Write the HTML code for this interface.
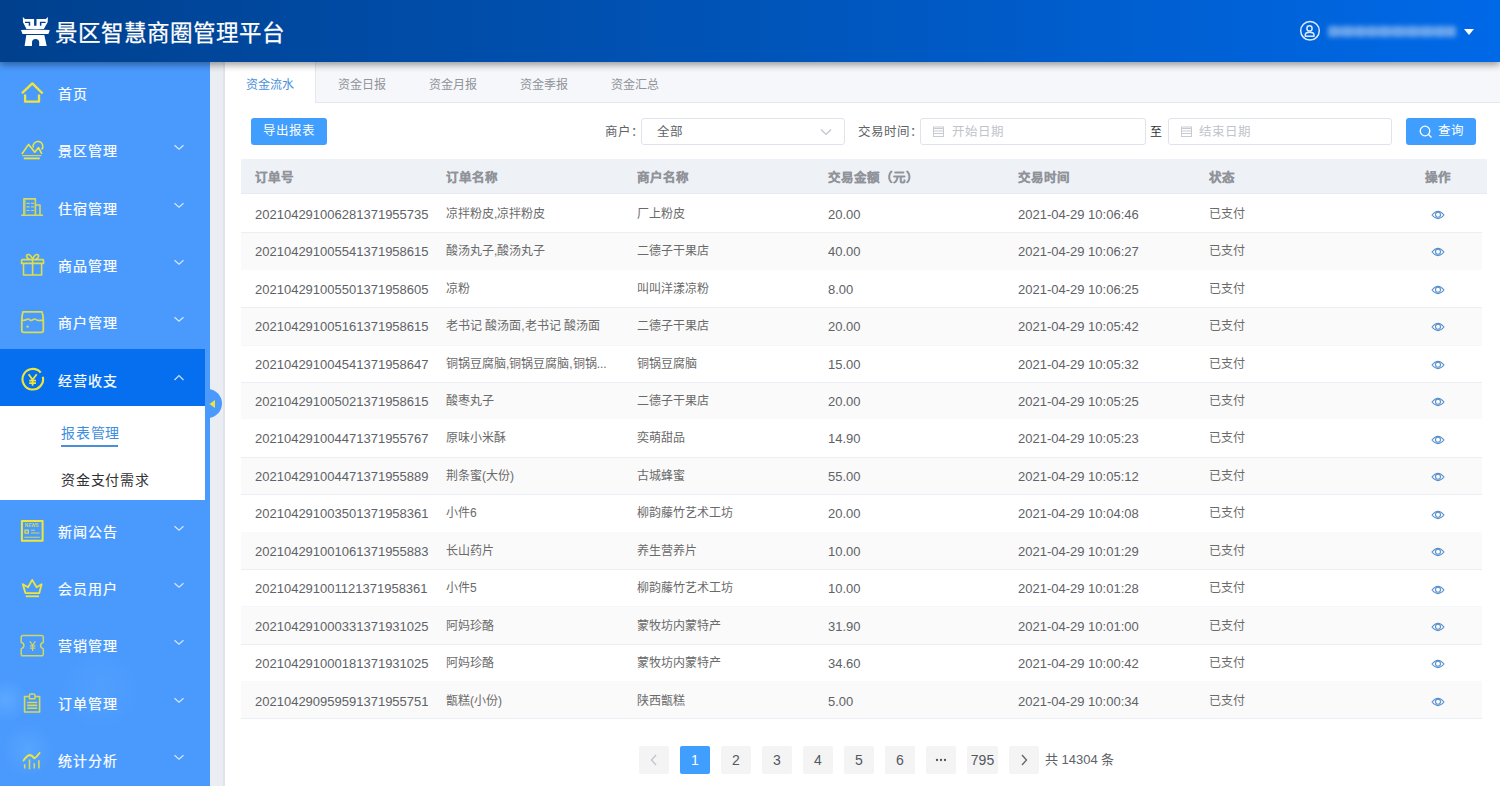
<!DOCTYPE html>
<html lang="zh-CN">
<head>
<meta charset="utf-8">
<style>
*{margin:0;padding:0;box-sizing:border-box;}
html,body{width:1500px;height:786px;overflow:hidden;background:#fff;font-family:"Liberation Sans",sans-serif;position:relative;}
.hdr{position:absolute;left:0;top:0;width:1500px;height:62px;background:linear-gradient(90deg,#00408d 0%,#004aa3 22.7%,#0054b8 50%,#0069e8 100%);box-shadow:0 3px 7px rgba(0,0,0,.38);z-index:5;}
.hdr .title{position:absolute;left:55px;top:19px;font-size:22.5px;-webkit-text-stroke:0.25px #fff;line-height:30px;color:#fff;white-space:nowrap;}
.side{position:absolute;left:0;top:0;width:210px;height:786px;background:radial-gradient(circle at 6px 700px, rgba(110,185,255,.45) 0, rgba(110,185,255,0) 22px),radial-gradient(circle at 28px 750px, rgba(110,185,255,.35) 0, rgba(110,185,255,0) 26px),radial-gradient(circle at 100px 690px, rgba(110,185,255,.18) 0, rgba(110,185,255,0) 40px),#4a9afe;overflow:hidden;}
.gap{position:absolute;left:210px;top:62px;width:15px;height:724px;background:#eaedf2;border-right:2px solid #e0e4ea;}
.main{position:absolute;left:225px;top:62px;width:1276px;height:724px;background:#fff;}
.mt{position:absolute;left:58px;height:22px;line-height:25px;font-size:14px;letter-spacing:0.9px;color:#fff;-webkit-text-stroke:0.2px #fff;white-space:nowrap;}
.sub{position:absolute;left:61px;height:22px;line-height:25px;font-size:14px;letter-spacing:0.75px;color:#303133;white-space:nowrap;}
.sub.act{color:#3d8ee2;}
.tabs{position:absolute;left:225px;top:62px;width:1275px;height:41px;background:#f5f7fa;border-bottom:1px solid #e4e7ed;}
.tab{position:absolute;top:0;height:40px;line-height:46px;font-size:12px;color:#909399;text-align:center;width:92px;}
.tab.act{background:#fff;color:#4a90d8;border-right:1px solid #e4e7ed;height:41px;}
.btn{position:absolute;top:118px;height:27px;line-height:27px;background:#409eff;border-radius:3px;color:#fff;font-size:12.5px;text-align:center;}
.lbl{position:absolute;top:118px;height:27px;line-height:28px;font-size:12.5px;color:#606266;white-space:nowrap;}
.inp{position:absolute;top:118px;height:27px;border:1px solid #e0e3e9;border-radius:3px;background:#fff;}
.inp .ph{position:absolute;top:0;line-height:26px;font-size:12.5px;color:#c0c4cc;white-space:nowrap;}
.thead{position:absolute;left:241px;top:159px;width:1246px;height:35px;background:#eef1f6;border-bottom:1px solid #e6e9f0;}
.th{position:absolute;top:0;line-height:38px;font-size:12.5px;font-weight:bold;color:#909399;-webkit-text-stroke:0.2px #909399;white-space:nowrap;}
.tr{position:absolute;left:241px;width:1241px;height:37px;}
.stripe{position:absolute;left:241px;width:1241px;background:#fafafa;}
.hline{position:absolute;left:241px;width:1241px;height:1px;background:#ebeef5;}
.td{position:absolute;top:0.8px;line-height:37px;font-size:13px;color:#606266;white-space:nowrap;}
.td.cn{font-size:12px;color:#6a6a6a;}
.eye{position:absolute;top:15px;}
.pb{position:absolute;top:746px;height:28px;background:#f4f4f5;border-radius:2px;font-size:14px;color:#53575e;display:flex;align-items:center;justify-content:center;}
.pb.act{background:#409eff;color:#fff;}
.total{position:absolute;left:1045px;top:746px;line-height:28px;font-size:13px;color:#606266;white-space:nowrap;}
</style>
</head>
<body>
<div class="side">
<div style="position:absolute;left:0;top:349px;width:205px;height:57px;background:#056fef"></div>
<div style="position:absolute;left:0;top:406px;width:205px;height:94px;background:#fff"></div>
<div class="mt" style="top:82px">首页</div>
<div class="mt" style="top:139px">景区管理</div>
<svg style="position:absolute;left:173px;top:144px" width="12" height="7" viewBox="0 0 12 7"><path d="M1.5 1.2 L6 5.2 L10.5 1.2" fill="none" stroke="#e4f0ff" stroke-width="1.15" opacity=".9"/></svg>
<div class="mt" style="top:197px">住宿管理</div>
<svg style="position:absolute;left:173px;top:202px" width="12" height="7" viewBox="0 0 12 7"><path d="M1.5 1.2 L6 5.2 L10.5 1.2" fill="none" stroke="#e4f0ff" stroke-width="1.15" opacity=".9"/></svg>
<div class="mt" style="top:254px">商品管理</div>
<svg style="position:absolute;left:173px;top:259px" width="12" height="7" viewBox="0 0 12 7"><path d="M1.5 1.2 L6 5.2 L10.5 1.2" fill="none" stroke="#e4f0ff" stroke-width="1.15" opacity=".9"/></svg>
<div class="mt" style="top:311px">商户管理</div>
<svg style="position:absolute;left:173px;top:316px" width="12" height="7" viewBox="0 0 12 7"><path d="M1.5 1.2 L6 5.2 L10.5 1.2" fill="none" stroke="#e4f0ff" stroke-width="1.15" opacity=".9"/></svg>
<div class="mt" style="top:369px">经营收支</div>
<svg style="position:absolute;left:173px;top:374px" width="12" height="7" viewBox="0 0 12 7"><path d="M1.5 6 L6 1.5 L10.5 6" fill="none" stroke="#e4f0ff" stroke-width="1.15" opacity=".9"/></svg>
<div class="mt" style="top:520px">新闻公告</div>
<svg style="position:absolute;left:173px;top:525px" width="12" height="7" viewBox="0 0 12 7"><path d="M1.5 1.2 L6 5.2 L10.5 1.2" fill="none" stroke="#e4f0ff" stroke-width="1.15" opacity=".9"/></svg>
<div class="mt" style="top:577px">会员用户</div>
<svg style="position:absolute;left:173px;top:582px" width="12" height="7" viewBox="0 0 12 7"><path d="M1.5 1.2 L6 5.2 L10.5 1.2" fill="none" stroke="#e4f0ff" stroke-width="1.15" opacity=".9"/></svg>
<div class="mt" style="top:634px">营销管理</div>
<svg style="position:absolute;left:173px;top:639px" width="12" height="7" viewBox="0 0 12 7"><path d="M1.5 1.2 L6 5.2 L10.5 1.2" fill="none" stroke="#e4f0ff" stroke-width="1.15" opacity=".9"/></svg>
<div class="mt" style="top:692px">订单管理</div>
<svg style="position:absolute;left:173px;top:697px" width="12" height="7" viewBox="0 0 12 7"><path d="M1.5 1.2 L6 5.2 L10.5 1.2" fill="none" stroke="#e4f0ff" stroke-width="1.15" opacity=".9"/></svg>
<div class="mt" style="top:749px">统计分析</div>
<svg style="position:absolute;left:173px;top:754px" width="12" height="7" viewBox="0 0 12 7"><path d="M1.5 1.2 L6 5.2 L10.5 1.2" fill="none" stroke="#e4f0ff" stroke-width="1.15" opacity=".9"/></svg>
<svg style="position:absolute;left:0;top:0" width="210" height="786" viewBox="0 0 210 786" fill="none" stroke="#eee63a" stroke-linejoin="round">
<path d="M22.6 92.6 L32.3 83.4 L42 92.8" stroke-width="2.3" stroke-linecap="round"/>
<path d="M25.1 94.6 V101.7 H39 V94.6" stroke-width="2.3"/>
<path d="M21.9 154 L28.6 144.4 L34.8 152.2 L38.6 147.6 L41.8 153.8" stroke-width="1.6"/>
<path d="M33.2 147.6 A4.9 4.9 0 1 1 41.6 149.6" stroke-width="1.5"/>
<path d="M22.2 155.6 H41.3" stroke-width="1.2" opacity=".8"/>
<path d="M23.8 158.4 H39.8" stroke-width="1.8"/>
<path d="M23.9 214.5 V198.9 H35.4 V214.5 M36.2 205 H40 V214.5 M21.2 215.2 H43" stroke-width="1.6" opacity=".85"/>
<path d="M25 199.5 V214" stroke-width="1.2" opacity=".6"/>
<path d="M26.4 203.3 H29.7 M31 203.3 H34.2 M26.4 206.9 H29.7 M31 206.9 H34.2 M26.4 210.5 H29.7 M31 210.5 H34.2" stroke-width="1.2" opacity=".75"/>
<path d="M22.3 259.6 H42.8 Q43.5 259.6 43.5 260.3 V263.4 H21.6 V260.3 Q21.6 259.6 22.3 259.6 Z M23.5 263.7 V275 H41.6 V263.7 M32.6 259.4 V275" stroke-width="1.6" opacity=".9"/>
<path d="M32.6 259 C31 255.5 29 253.8 27.3 254.7 C25.8 255.8 27 258.6 29.5 259.4 M32.6 259 C34.2 255.5 36.2 253.8 37.9 254.7 C39.4 255.8 38.2 258.6 35.7 259.4" stroke-width="1.6" opacity=".9"/>
<path d="M23 311.8 H42 Q43.3 316 43.3 320 V330.5 Q43.3 332.4 41.4 332.4 H23.7 Q21.8 332.4 21.8 330.5 V320 Q21.8 316 23 311.8 Z" stroke-width="1.8" opacity=".88"/>
<path d="M22 320.3 Q25 320.6 26.6 319.5 Q28.2 318.4 29.7 319.8 Q31.2 321.2 33 319.6 Q34.7 318.3 36.2 319.7 Q37.8 321 39.4 320.3 Q41.5 320.5 43 320.3" stroke-width="1.6" opacity=".88"/>
<circle cx="27.6" cy="326.6" r="1.2" fill="#eee63a" stroke="none" opacity=".88"/>
<path d="M42.8 376.7 A10.3 10.3 0 1 1 40.7 372.6" stroke-width="2.1"/>
<path d="M28.6 374.3 L32.6 379.8 L36.7 374.3 M32.6 379.8 V385.8 M29.2 380.6 H36 M29.2 383.1 H36" stroke-width="1.8"/>
<rect x="21.9" y="521" width="20.7" height="19.7" stroke-width="2"/>
<text x="32" y="526.6" font-size="4.6" font-family="Liberation Sans" font-weight="bold" fill="#eee63a" stroke="none" text-anchor="middle" opacity=".8">NEWS</text>
<rect x="25" y="530.2" width="3.3" height="3" stroke-width="1.3" opacity=".9"/>
<path d="M31 530.2 H35 M31 533 H39.5 M24.3 537.3 H39.8" stroke-width="1.1" opacity=".8"/>
<path d="M22.8 584.2 L28 587.2 L32.2 579.9 L36.6 587.2 L41.6 584.3 L39.3 593.1 H25.4 Z" stroke-width="1.8"/>
<path d="M25.8 596.3 H39" stroke-width="1.7"/>
<path d="M23 635.6 H41.5 Q43.3 635.6 43.3 637.4 V642.3 Q40.6 643.3 40.6 645.6 Q40.6 647.9 43.3 648.9 V654 Q43.3 655.8 41.5 655.8 H23 Q21.2 655.8 21.2 654 V648.9 Q23.9 647.9 23.9 645.6 Q23.9 643.3 21.2 642.3 V637.4 Q21.2 635.6 23 635.6 Z" stroke-width="1.5" opacity=".8"/>
<path d="M29.8 641.3 L32.6 645.2 L35.4 641.3 M32.6 645.2 V651 M29.9 645.8 H35.3 M29.9 648.1 H35.3" stroke-width="1.2" opacity=".8"/>
<path d="M28.8 696.5 H24.6 V712 H39.6 V696.5 H35.4" stroke-width="1.6" opacity=".85"/>
<path d="M29.4 698.7 V695.4 Q29.4 694 30.8 694 H33.6 Q35 694 35 695.4 V698.7 Z" stroke-width="1.5" opacity=".85"/>
<path d="M27.2 702.5 H37.2 M27.2 705.4 H37.2 M27.2 708.3 H37.2" stroke-width="1.6" opacity=".85"/>
<path d="M24.7 764.2 V768.5 M29.5 759.5 V769.3 M34.3 763.2 V768.5 M38.9 760.2 V768.5" stroke-width="1.6" opacity=".85"/>
<path d="M23.5 760.6 Q27 755.4 29.9 755 Q32 755.3 34.5 758.4 Q37 756.5 39.6 753" stroke-width="1.8" stroke-linecap="round"/>
</svg>
<div class="sub act" style="top:421px">报表管理</div>
<div style="position:absolute;left:61px;top:445px;width:57px;height:2px;background:#4a90d9"></div>
<div class="sub" style="top:468px">资金支付需求</div>
<div style="position:absolute;left:205px;top:390px;width:16px;height:28px;"></div>
</div>
<div class="gap"></div>
<div class="main"></div>
<div style="position:absolute;left:205px;top:389px;width:17px;height:29px;background:#4a9afe;border-radius:0 14.5px 14.5px 0 / 0 14.5px 14.5px 0;z-index:3"><svg style="position:absolute;left:3px;top:10px" width="8" height="10" viewBox="0 0 8 10"><path d="M7 1 L1.5 5 L7 9 Z" fill="#ede43c"/></svg></div>

<div class="hdr">
  <svg style="position:absolute;left:15px;top:10px" width="40" height="42" viewBox="15 10 40 42">
    <path fill-rule="evenodd" fill="#fff" d="M22.8 16.9 L24.9 18.9 L45.8 18.9 L47.9 16.9 L47.7 22.3 L43.8 28.9 L26.5 28.9 L23 22.3 Z M34.1 18.9 H36.5 V25.8 H34.1 Z M25 21.8 H30.2 V25.8 H28.7 V22.9 H25 Z M39.9 21.8 H45.6 V22.9 H41.4 V25.8 H39.9 Z"/>
    <path fill="#fff" d="M21 30 Q35.3 29.2 49.8 30 L48.4 34 L22.5 34 Z"/>
    <path fill="#fff" d="M26.3 35.1 H44.3 L46.7 45.9 H39.2 V42.6 A3.6 3.6 0 0 0 32 42.6 V45.9 H24.6 Z"/>
  </svg>
  <div class="title">景区智慧商圈管理平台</div>
  <svg style="position:absolute;left:1299px;top:20px" width="22" height="22" viewBox="0 0 22 22"><circle cx="11" cy="10.8" r="9.3" fill="none" stroke="#dcebff" stroke-width="1.5"/><circle cx="10.5" cy="8.4" r="2.6" fill="none" stroke="#dcebff" stroke-width="1.5"/><path d="M6.3 16.3 V14.8 Q6.3 12.2 10.6 12.2 Q15 12.2 15 14.8 V16.3 Z" fill="none" stroke="#dcebff" stroke-width="1.5" stroke-linejoin="round"/></svg>
  <div style="position:absolute;left:1326px;top:23px;width:132px;height:17px;filter:blur(2.6px);opacity:.62"><div style="position:absolute;left:2px;top:4px;width:128px;height:9px;background:#8ab8f2"></div><div style="position:absolute;left:2px;top:3px;width:12px;height:11px;background:#a8c9f4;border-radius:2px"></div><div style="position:absolute;left:15px;top:3px;width:13px;height:11px;background:#a8c9f4;border-radius:2px"></div><div style="position:absolute;left:29px;top:3px;width:11px;height:11px;background:#a8c9f4;border-radius:2px"></div><div style="position:absolute;left:41px;top:3px;width:10px;height:11px;background:#a8c9f4;border-radius:2px"></div><div style="position:absolute;left:52px;top:3px;width:13px;height:11px;background:#a8c9f4;border-radius:2px"></div><div style="position:absolute;left:66px;top:3px;width:13px;height:11px;background:#a8c9f4;border-radius:2px"></div><div style="position:absolute;left:80px;top:3px;width:13px;height:11px;background:#a8c9f4;border-radius:2px"></div><div style="position:absolute;left:94px;top:3px;width:13px;height:11px;background:#a8c9f4;border-radius:2px"></div><div style="position:absolute;left:108px;top:3px;width:12px;height:11px;background:#a8c9f4;border-radius:2px"></div><div style="position:absolute;left:120px;top:3px;width:10px;height:11px;background:#a8c9f4;border-radius:2px"></div></div>
  <svg style="position:absolute;left:1463px;top:28px" width="12" height="8" viewBox="0 0 12 8"><path d="M1 1 H11 L6 7 Z" fill="#fff"/></svg>
</div>

<div class="tabs">
  <div class="tab act" style="left:0;width:91px">资金流水</div>
  <div class="tab" style="left:91px;width:91px">资金日报</div>
  <div class="tab" style="left:182px;width:91px">资金月报</div>
  <div class="tab" style="left:273px;width:91px">资金季报</div>
  <div class="tab" style="left:364px;width:91px">资金汇总</div>
</div>

<div class="btn" style="left:251px;width:76px">导出报表</div>
<div class="lbl" style="left:605px">商户：</div>
<div class="inp" style="left:641px;width:204px"><span class="ph" style="left:15px;color:#606266">全部</span>
  <svg style="position:absolute;left:178px;top:9px" width="12" height="8" viewBox="0 0 12 8"><path d="M1 1.5 L6 6.5 L11 1.5" fill="none" stroke="#c0c4cc" stroke-width="1.2"/></svg></div>
<div class="lbl" style="left:858px">交易时间：</div>
<div class="inp" style="left:920px;width:226px"><svg style="position:absolute;left:12px;top:7px" width="11" height="11" viewBox="0 0 11 11"><rect x="0.5" y="1" width="10" height="9.5" fill="none" stroke="#c8cbd2" stroke-width="1"/><path d="M0.5 2.5 H10.5 M0.5 5 H10.5 M0.5 7.5 H10.5" stroke="#c8cbd2" stroke-width="1"/></svg><span class="ph" style="left:31px">开始日期</span></div>
<div class="lbl" style="left:1150px;color:#303133;font-size:12px">至</div>
<div class="inp" style="left:1168px;width:224px"><svg style="position:absolute;left:12px;top:7px" width="11" height="11" viewBox="0 0 11 11"><rect x="0.5" y="1" width="10" height="9.5" fill="none" stroke="#c8cbd2" stroke-width="1"/><path d="M0.5 2.5 H10.5 M0.5 5 H10.5 M0.5 7.5 H10.5" stroke="#c8cbd2" stroke-width="1"/></svg><span class="ph" style="left:30px">结束日期</span></div>
<div class="btn" style="left:1406px;width:70px"><svg style="position:absolute;left:13px;top:7px" width="14" height="14" viewBox="0 0 14 14"><circle cx="6" cy="6" r="4.8" fill="none" stroke="#fff" stroke-width="1.3"/><path d="M9.5 9.5 L12.5 12.5" stroke="#fff" stroke-width="1.3"/></svg><span style="position:absolute;left:32px">查询</span></div>

<div class="thead">
<span class="th" style="left:14px">订单号</span>
<span class="th" style="left:205px">订单名称</span>
<span class="th" style="left:396px">商户名称</span>
<span class="th" style="left:587px">交易金额（元）</span>
<span class="th" style="left:777px">交易时间</span>
<span class="th" style="left:968px">状态</span>
<span class="th" style="left:1184px">操作</span>
</div>
<div class="stripe" style="top:233px;height:37px"></div>
<div class="stripe" style="top:308px;height:37px"></div>
<div class="stripe" style="top:383px;height:36px"></div>
<div class="stripe" style="top:458px;height:36px"></div>
<div class="stripe" style="top:532px;height:37px"></div>
<div class="stripe" style="top:607px;height:37px"></div>
<div class="stripe" style="top:681px;height:37px"></div>
<div class="hline" style="top:232px"></div>
<div class="hline" style="top:307px"></div>
<div class="hline" style="top:382px"></div>
<div class="hline" style="top:457px"></div>
<div class="hline" style="top:494px"></div>
<div class="hline" style="top:569px"></div>
<div class="hline" style="top:644px"></div>
<div class="hline" style="top:718px"></div>
<div class="hline" style="top:345px;opacity:.45"></div>
<div class="hline" style="top:606px;opacity:.45"></div>
<div class="tr" style="top:195.0px">
<span class="td num" style="left:14px">202104291006281371955735</span>
<span class="td cn" style="left:205px">凉拌粉皮,凉拌粉皮</span>
<span class="td cn" style="left:396px">厂上粉皮</span>
<span class="td num" style="left:587px">20.00</span>
<span class="td num" style="left:777px">2021-04-29 10:06:46</span>
<span class="td cn" style="left:968px">已支付</span>
<svg class="eye" style="left:1190px" width="14" height="10" viewBox="0 0 14 10"><path d="M1 5 Q7 -2.2 13 5 Q7 12.2 1 5 Z" fill="none" stroke="#5a90cc" stroke-width="1.1"/><circle cx="7" cy="4.8" r="2.5" fill="none" stroke="#5a90cc" stroke-width="1.1"/></svg>
</div>
<div class="tr" style="top:232.45px">
<span class="td num" style="left:14px">202104291005541371958615</span>
<span class="td cn" style="left:205px">酸汤丸子,酸汤丸子</span>
<span class="td cn" style="left:396px">二德子干果店</span>
<span class="td num" style="left:587px">40.00</span>
<span class="td num" style="left:777px">2021-04-29 10:06:27</span>
<span class="td cn" style="left:968px">已支付</span>
<svg class="eye" style="left:1190px" width="14" height="10" viewBox="0 0 14 10"><path d="M1 5 Q7 -2.2 13 5 Q7 12.2 1 5 Z" fill="none" stroke="#5a90cc" stroke-width="1.1"/><circle cx="7" cy="4.8" r="2.5" fill="none" stroke="#5a90cc" stroke-width="1.1"/></svg>
</div>
<div class="tr" style="top:269.9px">
<span class="td num" style="left:14px">202104291005501371958605</span>
<span class="td cn" style="left:205px">凉粉</span>
<span class="td cn" style="left:396px">叫叫洋漾凉粉</span>
<span class="td num" style="left:587px">8.00</span>
<span class="td num" style="left:777px">2021-04-29 10:06:25</span>
<span class="td cn" style="left:968px">已支付</span>
<svg class="eye" style="left:1190px" width="14" height="10" viewBox="0 0 14 10"><path d="M1 5 Q7 -2.2 13 5 Q7 12.2 1 5 Z" fill="none" stroke="#5a90cc" stroke-width="1.1"/><circle cx="7" cy="4.8" r="2.5" fill="none" stroke="#5a90cc" stroke-width="1.1"/></svg>
</div>
<div class="tr" style="top:307.35px">
<span class="td num" style="left:14px">202104291005161371958615</span>
<span class="td cn" style="left:205px">老书记 酸汤面,老书记 酸汤面</span>
<span class="td cn" style="left:396px">二德子干果店</span>
<span class="td num" style="left:587px">20.00</span>
<span class="td num" style="left:777px">2021-04-29 10:05:42</span>
<span class="td cn" style="left:968px">已支付</span>
<svg class="eye" style="left:1190px" width="14" height="10" viewBox="0 0 14 10"><path d="M1 5 Q7 -2.2 13 5 Q7 12.2 1 5 Z" fill="none" stroke="#5a90cc" stroke-width="1.1"/><circle cx="7" cy="4.8" r="2.5" fill="none" stroke="#5a90cc" stroke-width="1.1"/></svg>
</div>
<div class="tr" style="top:344.8px">
<span class="td num" style="left:14px">202104291004541371958647</span>
<span class="td cn" style="left:205px">铜锅豆腐脑,铜锅豆腐脑,铜锅...</span>
<span class="td cn" style="left:396px">铜锅豆腐脑</span>
<span class="td num" style="left:587px">15.00</span>
<span class="td num" style="left:777px">2021-04-29 10:05:32</span>
<span class="td cn" style="left:968px">已支付</span>
<svg class="eye" style="left:1190px" width="14" height="10" viewBox="0 0 14 10"><path d="M1 5 Q7 -2.2 13 5 Q7 12.2 1 5 Z" fill="none" stroke="#5a90cc" stroke-width="1.1"/><circle cx="7" cy="4.8" r="2.5" fill="none" stroke="#5a90cc" stroke-width="1.1"/></svg>
</div>
<div class="tr" style="top:382.25px">
<span class="td num" style="left:14px">202104291005021371958615</span>
<span class="td cn" style="left:205px">酸枣丸子</span>
<span class="td cn" style="left:396px">二德子干果店</span>
<span class="td num" style="left:587px">20.00</span>
<span class="td num" style="left:777px">2021-04-29 10:05:25</span>
<span class="td cn" style="left:968px">已支付</span>
<svg class="eye" style="left:1190px" width="14" height="10" viewBox="0 0 14 10"><path d="M1 5 Q7 -2.2 13 5 Q7 12.2 1 5 Z" fill="none" stroke="#5a90cc" stroke-width="1.1"/><circle cx="7" cy="4.8" r="2.5" fill="none" stroke="#5a90cc" stroke-width="1.1"/></svg>
</div>
<div class="tr" style="top:419.7px">
<span class="td num" style="left:14px">202104291004471371955767</span>
<span class="td cn" style="left:205px">原味小米酥</span>
<span class="td cn" style="left:396px">奕萌甜品</span>
<span class="td num" style="left:587px">14.90</span>
<span class="td num" style="left:777px">2021-04-29 10:05:23</span>
<span class="td cn" style="left:968px">已支付</span>
<svg class="eye" style="left:1190px" width="14" height="10" viewBox="0 0 14 10"><path d="M1 5 Q7 -2.2 13 5 Q7 12.2 1 5 Z" fill="none" stroke="#5a90cc" stroke-width="1.1"/><circle cx="7" cy="4.8" r="2.5" fill="none" stroke="#5a90cc" stroke-width="1.1"/></svg>
</div>
<div class="tr" style="top:457.15px">
<span class="td num" style="left:14px">202104291004471371955889</span>
<span class="td cn" style="left:205px">荆条蜜(大份)</span>
<span class="td cn" style="left:396px">古城蜂蜜</span>
<span class="td num" style="left:587px">55.00</span>
<span class="td num" style="left:777px">2021-04-29 10:05:12</span>
<span class="td cn" style="left:968px">已支付</span>
<svg class="eye" style="left:1190px" width="14" height="10" viewBox="0 0 14 10"><path d="M1 5 Q7 -2.2 13 5 Q7 12.2 1 5 Z" fill="none" stroke="#5a90cc" stroke-width="1.1"/><circle cx="7" cy="4.8" r="2.5" fill="none" stroke="#5a90cc" stroke-width="1.1"/></svg>
</div>
<div class="tr" style="top:494.6px">
<span class="td num" style="left:14px">202104291003501371958361</span>
<span class="td cn" style="left:205px">小件6</span>
<span class="td cn" style="left:396px">柳韵藤竹艺术工坊</span>
<span class="td num" style="left:587px">20.00</span>
<span class="td num" style="left:777px">2021-04-29 10:04:08</span>
<span class="td cn" style="left:968px">已支付</span>
<svg class="eye" style="left:1190px" width="14" height="10" viewBox="0 0 14 10"><path d="M1 5 Q7 -2.2 13 5 Q7 12.2 1 5 Z" fill="none" stroke="#5a90cc" stroke-width="1.1"/><circle cx="7" cy="4.8" r="2.5" fill="none" stroke="#5a90cc" stroke-width="1.1"/></svg>
</div>
<div class="tr" style="top:532.05px">
<span class="td num" style="left:14px">202104291001061371955883</span>
<span class="td cn" style="left:205px">长山药片</span>
<span class="td cn" style="left:396px">养生营养片</span>
<span class="td num" style="left:587px">10.00</span>
<span class="td num" style="left:777px">2021-04-29 10:01:29</span>
<span class="td cn" style="left:968px">已支付</span>
<svg class="eye" style="left:1190px" width="14" height="10" viewBox="0 0 14 10"><path d="M1 5 Q7 -2.2 13 5 Q7 12.2 1 5 Z" fill="none" stroke="#5a90cc" stroke-width="1.1"/><circle cx="7" cy="4.8" r="2.5" fill="none" stroke="#5a90cc" stroke-width="1.1"/></svg>
</div>
<div class="tr" style="top:569.5px">
<span class="td num" style="left:14px">202104291001121371958361</span>
<span class="td cn" style="left:205px">小件5</span>
<span class="td cn" style="left:396px">柳韵藤竹艺术工坊</span>
<span class="td num" style="left:587px">10.00</span>
<span class="td num" style="left:777px">2021-04-29 10:01:28</span>
<span class="td cn" style="left:968px">已支付</span>
<svg class="eye" style="left:1190px" width="14" height="10" viewBox="0 0 14 10"><path d="M1 5 Q7 -2.2 13 5 Q7 12.2 1 5 Z" fill="none" stroke="#5a90cc" stroke-width="1.1"/><circle cx="7" cy="4.8" r="2.5" fill="none" stroke="#5a90cc" stroke-width="1.1"/></svg>
</div>
<div class="tr" style="top:606.95px">
<span class="td num" style="left:14px">202104291000331371931025</span>
<span class="td cn" style="left:205px">阿妈珍酪</span>
<span class="td cn" style="left:396px">蒙牧坊内蒙特产</span>
<span class="td num" style="left:587px">31.90</span>
<span class="td num" style="left:777px">2021-04-29 10:01:00</span>
<span class="td cn" style="left:968px">已支付</span>
<svg class="eye" style="left:1190px" width="14" height="10" viewBox="0 0 14 10"><path d="M1 5 Q7 -2.2 13 5 Q7 12.2 1 5 Z" fill="none" stroke="#5a90cc" stroke-width="1.1"/><circle cx="7" cy="4.8" r="2.5" fill="none" stroke="#5a90cc" stroke-width="1.1"/></svg>
</div>
<div class="tr" style="top:644.4px">
<span class="td num" style="left:14px">202104291000181371931025</span>
<span class="td cn" style="left:205px">阿妈珍酪</span>
<span class="td cn" style="left:396px">蒙牧坊内蒙特产</span>
<span class="td num" style="left:587px">34.60</span>
<span class="td num" style="left:777px">2021-04-29 10:00:42</span>
<span class="td cn" style="left:968px">已支付</span>
<svg class="eye" style="left:1190px" width="14" height="10" viewBox="0 0 14 10"><path d="M1 5 Q7 -2.2 13 5 Q7 12.2 1 5 Z" fill="none" stroke="#5a90cc" stroke-width="1.1"/><circle cx="7" cy="4.8" r="2.5" fill="none" stroke="#5a90cc" stroke-width="1.1"/></svg>
</div>
<div class="tr" style="top:681.85px">
<span class="td num" style="left:14px">202104290959591371955751</span>
<span class="td cn" style="left:205px">甑糕(小份)</span>
<span class="td cn" style="left:396px">陕西甑糕</span>
<span class="td num" style="left:587px">5.00</span>
<span class="td num" style="left:777px">2021-04-29 10:00:34</span>
<span class="td cn" style="left:968px">已支付</span>
<svg class="eye" style="left:1190px" width="14" height="10" viewBox="0 0 14 10"><path d="M1 5 Q7 -2.2 13 5 Q7 12.2 1 5 Z" fill="none" stroke="#5a90cc" stroke-width="1.1"/><circle cx="7" cy="4.8" r="2.5" fill="none" stroke="#5a90cc" stroke-width="1.1"/></svg>
</div>

<div class="pb prev" style="left:639px;width:30px"><svg width="8" height="12" viewBox="0 0 8 12"><path d="M6 1 L1.5 6 L6 11" fill="none" stroke="#c0c4cc" stroke-width="1.3"/></svg></div>
<div class="pb act" style="left:680px;width:30px">1</div>
<div class="pb " style="left:721px;width:30px">2</div>
<div class="pb " style="left:762px;width:30px">3</div>
<div class="pb " style="left:803px;width:30px">4</div>
<div class="pb " style="left:844px;width:30px">5</div>
<div class="pb " style="left:885px;width:30px">6</div>
<div class="pb more" style="left:926px;width:30px"><svg width="12" height="4" viewBox="0 0 12 4"><circle cx="2" cy="2" r="1.15" fill="#505459"/><circle cx="6" cy="2" r="1.15" fill="#505459"/><circle cx="10" cy="2" r="1.15" fill="#505459"/></svg></div>
<div class="pb " style="left:967px;width:31px">795</div>
<div class="pb next" style="left:1009px;width:30px"><svg width="8" height="12" viewBox="0 0 8 12"><path d="M2 1 L6.5 6 L2 11" fill="none" stroke="#606266" stroke-width="1.3"/></svg></div>
<div class="total">共 14304 条</div>
</body>
</html>
